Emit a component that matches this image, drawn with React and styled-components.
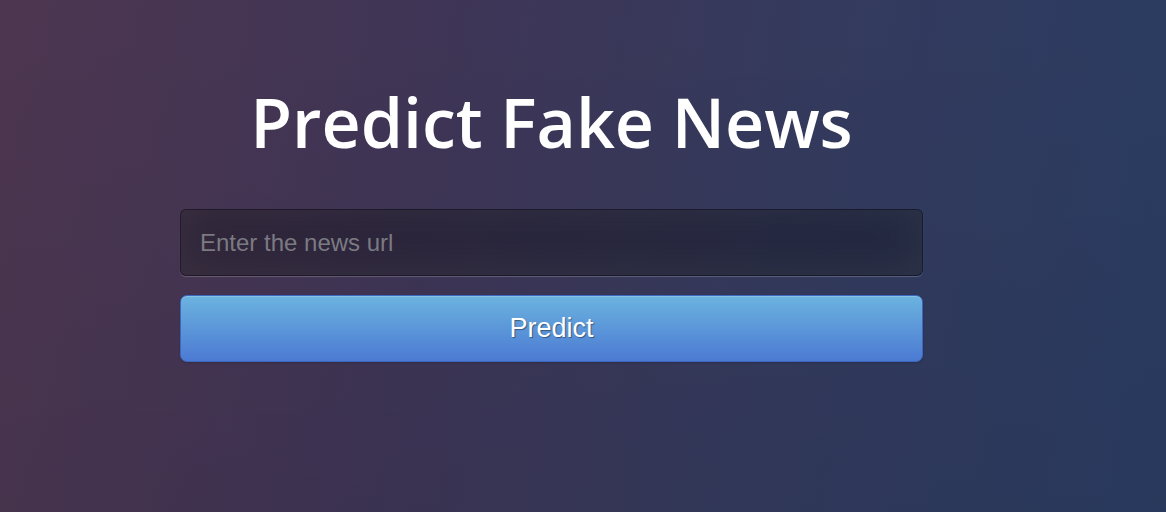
import React from 'react'
import styled, { createGlobalStyle } from 'styled-components'

const GlobalStyle = createGlobalStyle`
    html, body {
        margin: 0;
        padding: 0;
        height: 100%;
    }
    body {
        font-family: "Open Sans", "Liberation Sans", sans-serif;
        background:
            linear-gradient(to bottom, rgba(0, 0, 0, 0) 0%, rgba(0, 0, 0, 0.06) 100%),
            linear-gradient(100deg, #4d3650 0%, #3f3556 35%, #343a5d 65%, #2a3c62 100%);
        overflow: hidden;
    }
`

export default function App () {
    return (
        <Page>
            <GlobalStyle />
            <Box>
                <Titulo>Predict Fake News</Titulo>
                <Form onSubmit={e => e.preventDefault()}>
                    <Input type="text" placeholder="Enter the news url" />
                    <Botao type="submit">Predict</Botao>
                </Form>
            </Box>
        </Page>
    )
}

const Page = styled.div`
    width: 1166px;
    height: 512px;
    padding-top: 77px;
    box-sizing: border-box;
`

const Box = styled.div`
    width: 743px;
    margin-left: 180px;
    display: flex;
    flex-direction: column;
    align-items: center;
`

const Titulo = styled.h1`
    margin: 0;
    font-family: "Open Sans", sans-serif;
    font-weight: 600;
    font-size: 68px;
    line-height: 90px;
    color: #fff;
`

const Form = styled.form`
    width: 100%;
    display: flex;
    flex-direction: column;
    gap: 19px;
    margin-top: 42px;
`

const Input = styled.input`
    box-sizing: border-box;
    width: 100%;
    height: 67px;
    padding: 0 19px;
    font-family: "Liberation Sans", Arial, sans-serif;
    font-size: 24px;
    color: #ddd;
    background: rgba(0, 0, 0, 0.3);
    border: 1px solid rgba(0, 0, 0, 0.3);
    border-radius: 6px;
    box-shadow: inset 0 -5px 45px rgba(100, 100, 100, 0.2), 0 1px 1px rgba(255, 255, 255, 0.2);
    outline: none;

    &::placeholder {
        color: #7b7a82;
    }
`

const Botao = styled.button`
    box-sizing: border-box;
    width: 100%;
    height: 67px;
    font-family: "Liberation Sans", Arial, sans-serif;
    font-size: 27px;
    color: #fff;
    text-shadow: 1px 1px 1px rgba(0, 0, 0, 0.4);
    background: linear-gradient(to bottom, #6bb3df, #4c7ad3);
    border: 1px solid #3d68bf;
    border-radius: 7px;
    box-shadow: inset 0 1px 0 rgba(255, 255, 255, 0.2), 0 1px 2px rgba(0, 0, 0, 0.15);
    cursor: pointer;
`
